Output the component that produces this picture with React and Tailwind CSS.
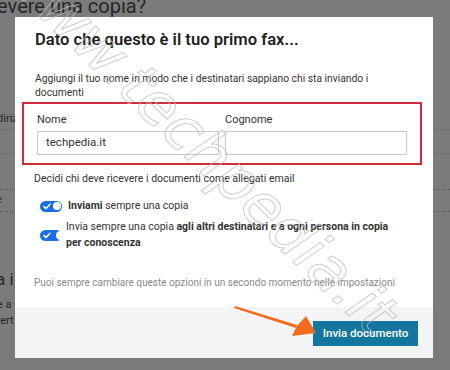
import React from "react";

function Toggle({ cut }) {
  return (
    <div className="relative w-[22px] h-[11px] rounded-full bg-[#1c6fe3] shrink-0 flex items-center">
      <svg width="8" height="7" viewBox="0 0 8 7" className="ml-[3px]">
        <path d="M1 3.6 L3.1 5.6 L7 1.2" fill="none" stroke="#fff" strokeWidth="1.5" strokeLinecap="round" strokeLinejoin="round" />
      </svg>
      <div className={cut ? "absolute right-[-3px] top-[1px] w-[9px] h-[9px] rounded-full bg-white" : "absolute right-[1.5px] top-[1.5px] w-[8px] h-[8px] rounded-full bg-white"} />
    </div>
  );
}

export default function App() {
  return (
    <div className="relative w-[450px] h-[370px] overflow-hidden bg-[#7b7b7b]" style={{ fontFamily: "Roboto, 'Liberation Sans', sans-serif" }}>
      {/* background page */}
      <div className="flex flex-col text-[#262626]">
        <div className="ml-[-25px] text-[20px] leading-[18px] h-[18px] mt-[-3px]">ricevere una copia?</div>
        <div className="h-[97px]" />
        <div className="ml-[-12px] text-[11px] leading-[14px] h-[14px]">Indirizzo</div>
        <div className="border-t border-[#6e6e6e] mt-[3px] h-[24px] flex items-center ml-[-6px] text-[11px]">7</div>
        <div className="border-t border-[#6e6e6e] h-[36px]" />
        <div className="border-t border-dashed border-[#5e5e5e] h-[22px] flex items-center ml-[-10px] text-[11px] text-[#3a3a3a]">de</div>
        <div className="border-t border-dashed border-[#5e5e5e] h-[58px]" />
        <div className="ml-[-4px] text-[17px] leading-[20px]">a i</div>
        <div className="h-[8px]" />
        <div className="ml-[-3px] text-[11px] leading-[16px]">e a</div>
        <div className="ml-[-6px] text-[11px] leading-[16px]">pert</div>
      </div>

      {/* modal */}
      <div className="absolute left-[15px] top-[17px] w-[418px] h-[341px] bg-white flex flex-col">
        <div className="flex-1 flex flex-col px-[20px]">
          <div className="mt-[11px] text-[16.6px] leading-[24px] font-semibold text-[#1f1f1f]">
            Dato che questo è il tuo primo fax...
          </div>
          <div className="mt-[20px] text-[10.3px] leading-[14px] text-[#333] w-[355px]">
            Aggiungi il tuo nome in modo che i destinatari sappiano chi sta inviando i documenti
          </div>
          <div className="mt-[2px] ml-[-13px] w-[400px] h-[63px] border-2 border-[#d22b3b] flex gap-[6px] px-[13px] pt-[9px]">
            <div className="flex flex-col w-[184px]">
              <div className="text-[11px] leading-[14px] text-[#333]">Nome</div>
              <div className="mt-[4px] h-[24px] border border-[#c9c9c9] flex items-center px-[8px] text-[11.5px] text-[#333]">techpedia.it</div>
            </div>
            <div className="flex flex-col w-[184px]">
              <div className="text-[11px] leading-[14px] text-[#333]">Cognome</div>
              <div className="mt-[4px] h-[24px] border border-[#c9c9c9]" />
            </div>
          </div>
          <div className="mt-[7px] text-[10.5px] leading-[14px] text-[#333] ml-[-1px]">
            Decidi chi deve ricevere i documenti come allegati email
          </div>
          <div className="mt-[13px] flex items-center gap-[6px] ml-[5px] text-[10.5px] leading-[14px] text-[#333]">
            <Toggle />
            <div><span className="font-bold">Inviami</span> sempre una copia</div>
          </div>
          <div className="mt-[6px] flex items-center gap-[4px] ml-[5px] text-[10.5px] leading-[16px] text-[#333]">
            <Toggle cut />
            <div className="w-[350px]">Invia sempre una copia <span className="font-bold">agli altri destinatari e a ogni persona in copia<br />per conoscenza</span></div>
          </div>
          <div className="mt-[25px] text-[10px] leading-[14px] text-[#8a8a8a] ml-[-1px]">
            Puoi sempre cambiare queste opzioni in un secondo momento nelle impostazioni
          </div>
        </div>
        <div className="h-[51px] bg-[#f2f4f6] flex items-center justify-end pr-[15px]">
          <div className="w-[105px] h-[25px] bg-[#12769e] text-white text-[11.5px] font-medium flex items-center justify-center mt-[2px]">
            Invia documento
          </div>
        </div>
      </div>

      {/* orange arrow */}
      <svg className="absolute left-0 top-0 pointer-events-none" width="450" height="370" viewBox="0 0 450 370">
        <path d="M235 306 L297 325 L296 328 L234 308 Z" fill="#f46b1c" />
        <path d="M316 333 L292 336 L297 326 L306 316 Z" fill="#f46b1c" />
      </svg>

      {/* watermark */}
      <div
        className="absolute left-[-70px] top-[110px] w-[540px] text-center pointer-events-none rotate-[44deg] italic text-[60px] leading-[66px] text-transparent [-webkit-text-stroke:1px_#bdbdbd] opacity-75"
        style={{ fontFamily: "'DejaVu Sans', sans-serif" }}
      >
        www.techpedia.it
      </div>
    </div>
  );
}
